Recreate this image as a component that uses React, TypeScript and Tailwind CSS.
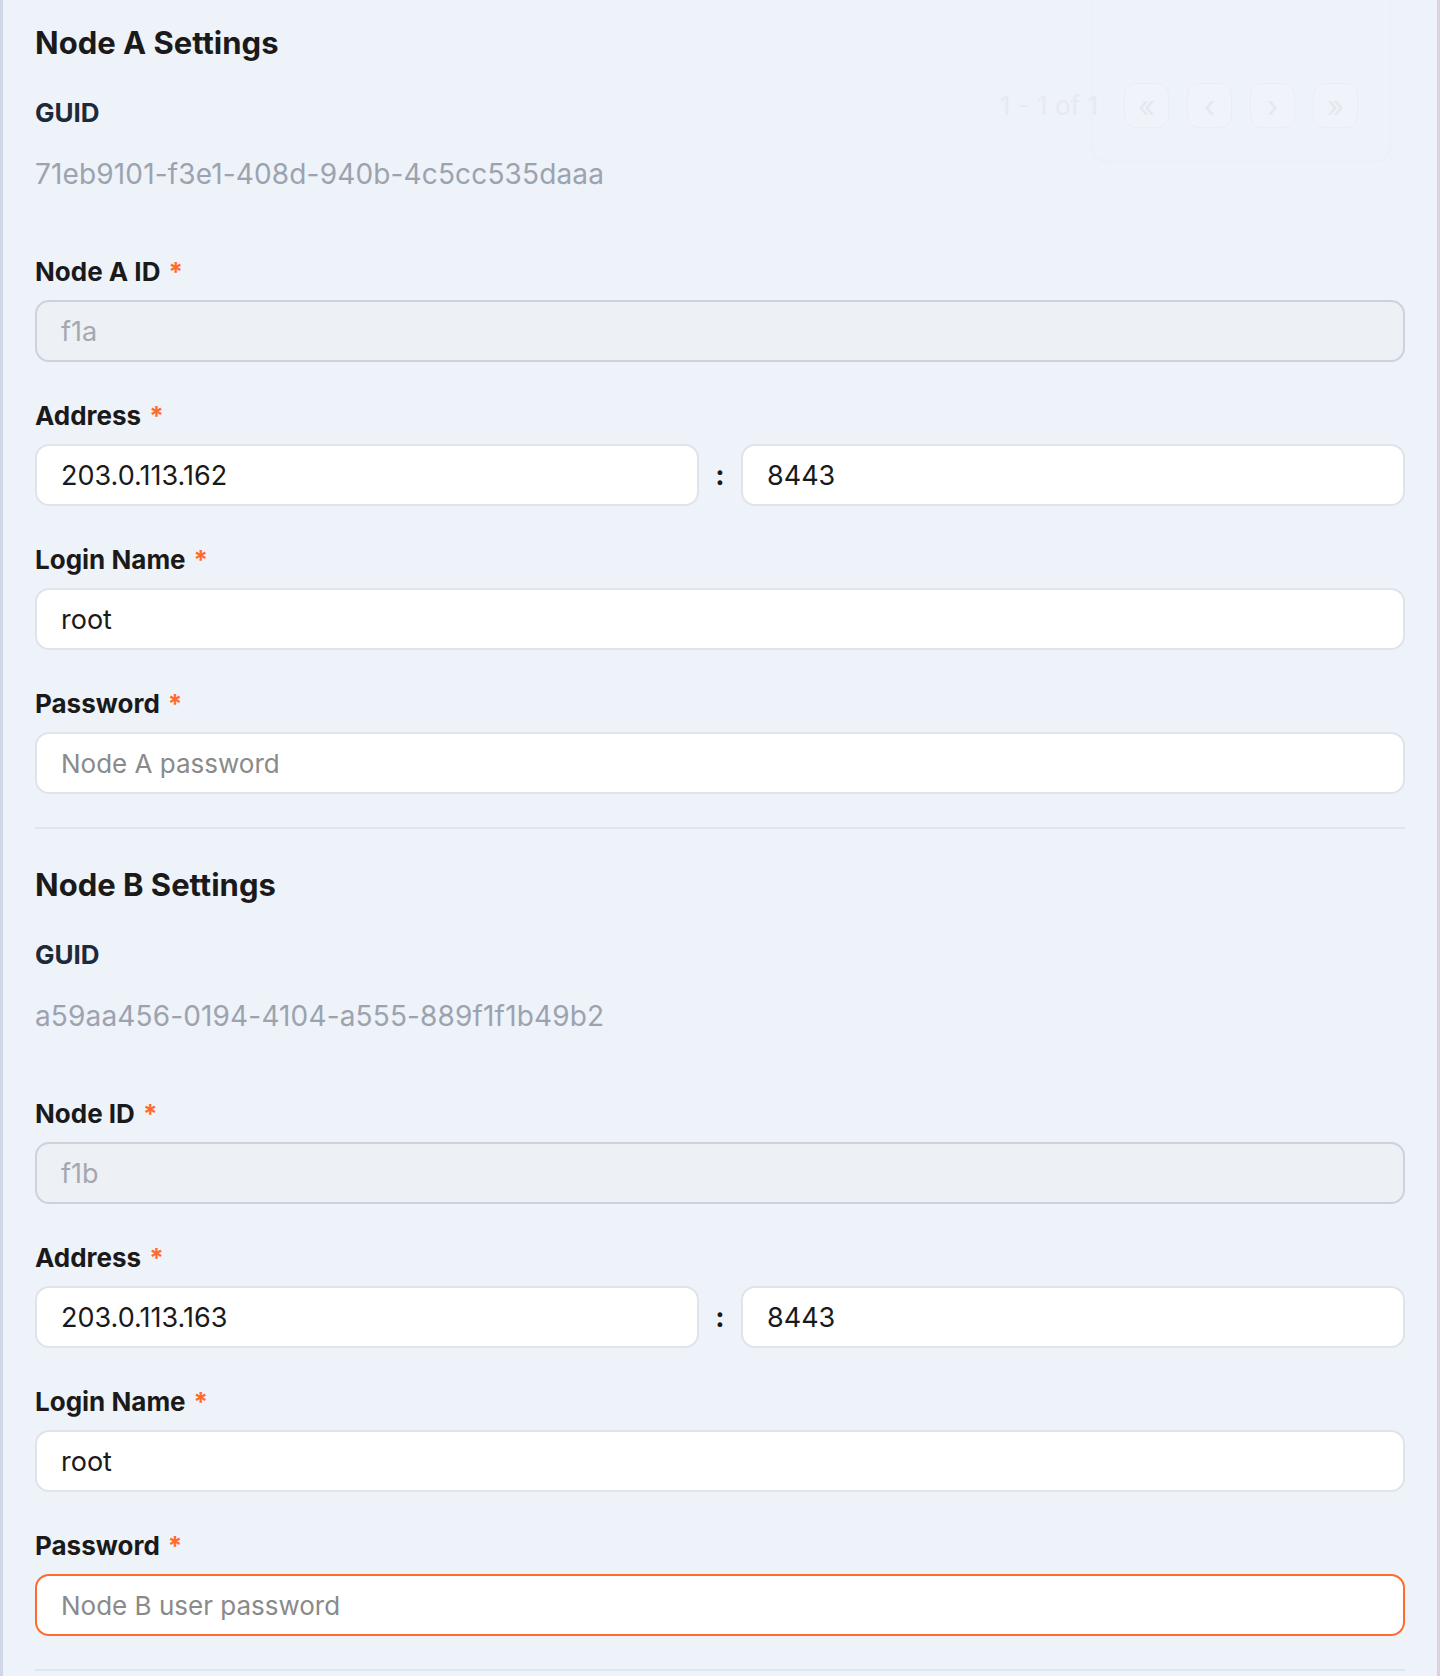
import React from "react";

type FieldProps = {
  label: string;
  children: React.ReactNode;
};

function Label({ text }: { text: string }) {
  return (
    <div className="flex items-start h-[32px] leading-[32px] text-[26px] font-bold text-[#1a1a1a]">
      <span>{text}</span>
      <span className="ml-[8px] text-[#ff6b2c]">*</span>
    </div>
  );
}

function Field({ label, children }: FieldProps) {
  return (
    <div className="flex flex-col gap-[12px]">
      <Label text={label} />
      {children}
    </div>
  );
}

function TextInput({
  value,
  placeholder,
  disabled,
  error,
}: {
  value?: string;
  placeholder?: string;
  disabled?: boolean;
  error?: boolean;
}) {
  const base =
    "w-full h-[62px] rounded-[14px] px-[24px] text-[27px] outline-none font-[Inter,sans-serif] placeholder:text-[26px]";
  let cls = base + " bg-white border-2 border-[#dfe3eb] text-[#1a1a1a] placeholder:text-[#8a8a8a]";
  if (disabled) cls = base + " bg-[#edf0f5] border-2 border-[#cdd3de] text-[#a3a8b1]";
  if (error) cls = base + " bg-white border-2 border-[#ff6b2c] text-[#1a1a1a] placeholder:text-[#8a8a8a]";
  return (
    <input
      className={cls}
      defaultValue={value}
      placeholder={placeholder}
      disabled={disabled}
      readOnly={disabled}
    />
  );
}

function Section({
  title,
  guid,
  idLabel,
  idValue,
  host,
  port,
  login,
  pwPlaceholder,
  pwError,
}: {
  title: string;
  guid: string;
  idLabel: string;
  idValue: string;
  host: string;
  port: string;
  login: string;
  pwPlaceholder: string;
  pwError?: boolean;
}) {
  return (
    <section className="flex flex-col">
      <h2 className="text-[31px] leading-[36px] font-bold text-[#1a1a1a]">{title}</h2>
      <div className="mt-[36px] text-[26px] leading-[32px] font-bold text-[#1e2939]">GUID</div>
      <div className="mt-[29px] text-[28px] leading-[32px] tracking-[0.15px] text-[#9ca3af]">{guid}</div>
      <div className="mt-[66px] flex flex-col gap-[38px]">
        <Field label={idLabel}>
          <TextInput value={idValue} disabled />
        </Field>
        <Field label="Address">
          <div className="flex items-center gap-[16px]">
            <div className="flex-1">
              <TextInput value={host} />
            </div>
            <span className="w-[10px] text-center text-[28px] font-bold text-[#1a1a1a]">:</span>
            <div className="flex-1">
              <TextInput value={port} />
            </div>
          </div>
        </Field>
        <Field label="Login Name">
          <TextInput value={login} />
        </Field>
        <Field label="Password">
          <TextInput placeholder={pwPlaceholder} error={pwError} />
        </Field>
      </div>
      <div className="mt-[33px] h-[2px] bg-[#dfe5f1]" />
    </section>
  );
}

function GhostPager() {
  return (
    <div className="pointer-events-none absolute right-[46px] top-0 flex h-[162px] w-[300px] items-start justify-end rounded-b-[16px] border border-t-0 border-[#e9edf4] pr-[32px] pt-[83px] opacity-70">
      <div className="flex items-center gap-[18px] whitespace-nowrap">
        <span className="mr-[8px] text-[26px] leading-[45px] text-[#e3e7ef]">1 - 1 of 1</span>
        {["«", "‹", "›", "»"].map((c, i) => (
          <div
            key={i}
            className="flex h-[45px] w-[45px] items-center justify-center rounded-[12px] border border-[#e8ecf3] bg-[#f1f4f9] text-[30px] leading-none text-[#dfe4ec]"
          >
            {c}
          </div>
        ))}
      </div>
    </div>
  );
}

export default function App() {
  return (
    <div
      className="relative min-h-screen w-full bg-[#eef2f9] border-l-[3px] border-r-[3px] border-l-[#d0d8e8] border-r-[#dcd3df]"
      style={{ fontFamily: "Inter, 'Noto Sans', sans-serif" }}
    >
      <GhostPager />
      <div className="relative flex flex-col gap-[38px] px-[32px] pt-[25px] pb-[5px]">
        <Section
          title="Node A Settings"
          guid="71eb9101-f3e1-408d-940b-4c5cc535daaa"
          idLabel="Node A ID"
          idValue="f1a"
          host="203.0.113.162"
          port="8443"
          login="root"
          pwPlaceholder="Node A password"
        />
        <Section
          title="Node B Settings"
          guid="a59aa456-0194-4104-a555-889f1f1b49b2"
          idLabel="Node ID"
          idValue="f1b"
          host="203.0.113.163"
          port="8443"
          login="root"
          pwPlaceholder="Node B user password"
          pwError
        />
      </div>
    </div>
  );
}
